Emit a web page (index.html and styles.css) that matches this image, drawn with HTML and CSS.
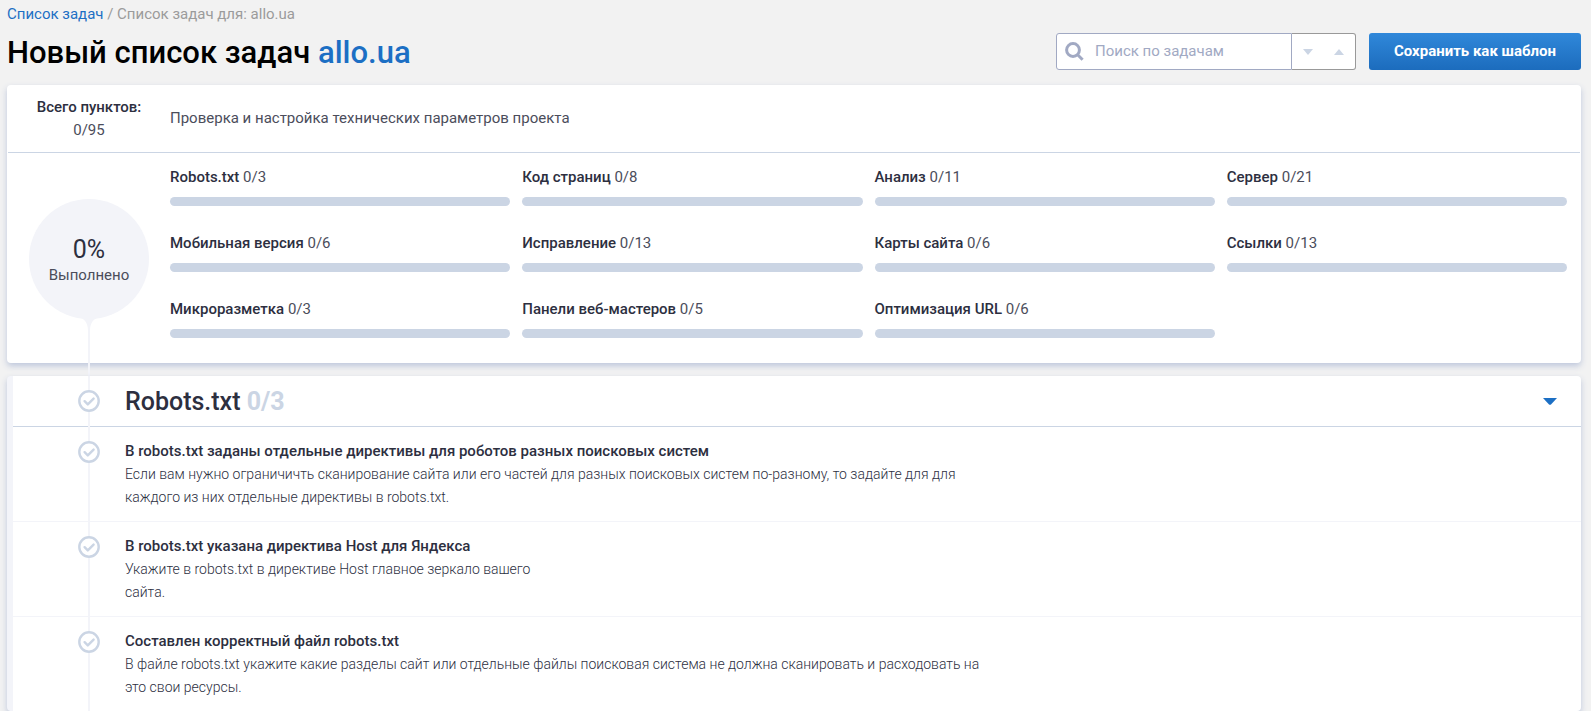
FILE: index.html
```html
<!DOCTYPE html>
<html lang="ru">
<head>
  <meta charset="UTF-8">
  <meta name="viewport" content="width=device-width, initial-scale=1.0">
  <title>Новый список задач allo.ua</title>
  <link rel="stylesheet" href="styles.css">
</head>
<body>
  <!-- icon shared by all the tasks -->
  <svg class="sprite" aria-hidden="true">
    <symbol id="check" viewBox="0 0 22 22">
      <circle cx="11" cy="11" r="9.7" fill="#fff" stroke="#cbd5e4" stroke-width="2.4"/>
      <path d="M6.6 11.2l3.2 3.2 5.8-5.8" fill="none" stroke="#cbd5e4" stroke-width="2.4" stroke-linecap="round" stroke-linejoin="round"/>
    </symbol>
  </svg>

  <nav class="breadcrumbs">
    <a href="#">Список задач</a> / Список задач для: allo.ua
  </nav>

  <header class="page-header">
    <h1>Новый список задач <span>allo.ua</span></h1>
    <form class="search">
      <label class="search-field">
        <svg width="20" height="20" viewBox="0 0 20 20" aria-hidden="true">
          <circle cx="8" cy="8" r="6.4" fill="none" stroke="#a1a9c3" stroke-width="3"/>
          <path d="M12.6 12.8l5 5" stroke="#a1a9c3" stroke-width="3"/>
        </svg>
        <input type="text" placeholder="Поиск по задачам" aria-label="Поиск по задачам">
      </label>
      <div class="search-nav">
        <button type="button" aria-label="Следующая">
          <svg width="10" height="6" viewBox="0 0 10 6"><path d="M0 0h10L5 6z" fill="#cbd5e4"/></svg>
        </button>
        <button type="button" aria-label="Предыдущая">
          <svg width="10" height="6" viewBox="0 0 10 6"><path d="M0 6h10L5 0z" fill="#cbd5e4"/></svg>
        </button>
      </div>
    </form>
    <button type="button" class="btn-save">Сохранить как шаблон</button>
  </header>

  <main>
    <section class="card summary">
      <div class="summary-head">
        <div class="total"><b>Всего пунктов:</b><br>0/95</div>
        <p>Проверка и настройка технических параметров проекта</p>
      </div>
      <div class="summary-body">
        <div class="done">
          <div class="done-circle">
            <strong>0%</strong>
            <span>Выполнено</span>
          </div>
          <svg class="done-drop" width="24" height="14" viewBox="0 0 24 14" aria-hidden="true">
            <path d="M0 0C7 1 11 5 11 14h2C13 5 17 1 24 0z" fill="#f3f4f9"/>
          </svg>
          <div class="done-line"></div>
        </div>
        <ul class="groups">
          <li><b>Robots.txt</b> 0/3<div class="bar"></div></li>
          <li><b>Код страниц</b> 0/8<div class="bar"></div></li>
          <li><b>Анализ</b> 0/11<div class="bar"></div></li>
          <li><b>Сервер</b> 0/21<div class="bar"></div></li>
          <li><b>Мобильная версия</b> 0/6<div class="bar"></div></li>
          <li><b>Исправление</b> 0/13<div class="bar"></div></li>
          <li><b>Карты сайта</b> 0/6<div class="bar"></div></li>
          <li><b>Ссылки</b> 0/13<div class="bar"></div></li>
          <li><b>Микроразметка</b> 0/3<div class="bar"></div></li>
          <li><b>Панели веб-мастеров</b> 0/5<div class="bar"></div></li>
          <li><b>Оптимизация URL</b> 0/6<div class="bar"></div></li>
        </ul>
      </div>
    </section>

    <section class="card tasks">
      <div class="tasks-head">
        <svg class="check" width="22" height="22"><use href="#check"/></svg>
        <h2>Robots.txt <span>0/3</span></h2>
        <button type="button" class="toggle" aria-label="Свернуть">
          <svg width="14" height="7" viewBox="0 0 14 7"><path d="M0 0h14L8 6.400q-1 .9-2 0z" fill="#1c6fc4"/></svg>
        </button>
      </div>
      <article class="task">
        <svg class="check" width="22" height="22"><use href="#check"/></svg>
        <div class="task-text">
          <h3>В robots.txt заданы отдельные директивы для роботов разных поисковых систем</h3>
          <p>Если вам нужно ограничичть сканирование сайта или его частей для разных поисковых систем по-разному, то задайте для для каждого из них отдельные директивы в robots.txt.</p>
        </div>
      </article>
      <article class="task">
        <svg class="check" width="22" height="22"><use href="#check"/></svg>
        <div class="task-text">
          <h3>В robots.txt указана директива Host для Яндекса</h3>
          <p>Укажите в robots.txt в директиве Host главное зеркало вашего<br>сайта.</p>
        </div>
      </article>
      <article class="task">
        <svg class="check" width="22" height="22"><use href="#check"/></svg>
        <div class="task-text">
          <h3>Составлен корректный файл robots.txt</h3>
          <p>В файле robots.txt укажите какие разделы сайт или отдельные файлы поисковая система не должна сканировать и расходовать на это свои ресурсы.</p>
        </div>
      </article>
    </section>
  </main>
</body>
</html>
```

FILE: styles.css
```css
* {
  box-sizing: border-box;
}
body {
  font-family: Roboto, sans-serif;
  font-size: 15px;
  line-height: 23px;
  margin: 0;
  padding: 3px 10px 0 7px;
  background-color: #f2f2f2;
  color: #2d2f3f;
}
h1, h2, h3, p, ul {
  margin: 0;
  padding: 0;
}
b, h1, h2, h3 {
  font-weight: 500;
}
button {
  font: inherit;
  padding: 0;
  border: 0;
  background: none;
  cursor: pointer;
}
.sprite {
  display: none;
}
.breadcrumbs {
  color: #9b9b9b;
}
.breadcrumbs a {
  color: #1c6fc4;
  text-decoration: none;
}

/* header */
.page-header {
  display: flex;
  align-items: center;
  padding: 7px 0 15px;
}
h1 {
  flex: 1;
  padding-top: 2px;
  font-size: 31px;
  line-height: 35px;
  color: #000;
}
h1 span {
  color: #1c6fc4;
}
.search {
  display: flex;
  width: 300px;
  height: 37px;
  margin-right: 13px;
}
.search-field {
  flex: 1;
  min-width: 0;
  display: flex;
  align-items: center;
  gap: 10px;
  padding-left: 8px;
  background: #fff;
  border: 1px solid #a1a9c3;
  border-radius: 3px 0 0 3px;
}
.search-field input {
  flex: 1;
  min-width: 0;
  padding: 0;
  border: 0;
  outline: 0;
  background: none;
  font: inherit;
  color: #2d2f3f;
}
.search-field input::placeholder {
  color: #a1a9c3;
  opacity: 1;
}
.search-nav {
  flex: none;
  display: flex;
  width: 64px;
  background: #fff;
  border: 1px solid #999;
  border-left: 0;
  border-radius: 0 3px 3px 0;
}
.search-nav button {
  flex: 1;
  display: flex;
  align-items: center;
  justify-content: center;
}
.btn-save {
  width: 212px;
  height: 37px;
  border-radius: 3px;
  background: linear-gradient(#3088da, #1c6cbd);
  color: #fff;
  font-weight: 700;
}

.card {
  background: #fff;
  border-radius: 4px;
  box-shadow: 0 3px 6px #bec7dc;
}

/* summary */
.summary {
  margin-bottom: 13px;
  padding: 0 1px;
  color: #4b4d5b;
}
.summary b, .summary strong {
  color: #2d2f3f;
}
.summary-head {
  display: flex;
  align-items: center;
  height: 68px;
  border-bottom: 1px solid #cbd5e4;
}
.total {
  width: 162px;
  text-align: center;
}
.summary-body {
  display: flex;
}
.done {
  display: flex;
  flex-direction: column;
  align-items: center;
  width: 162px;
  padding-top: 46px;
}
.done-circle {
  display: flex;
  flex-direction: column;
  align-items: center;
  justify-content: center;
  width: 120px;
  height: 120px;
  padding-top: 5px;
  border-radius: 50%;
  background: #f3f4f9;
}
.done-circle strong {
  font-size: 25px;
  line-height: 28px;
  font-weight: 400;
}
.done-drop {
  display: block;
  margin-top: -2px;
}
.done-line {
  position: relative;
  flex: 1;
  width: 2px;
  margin-bottom: -13px;
  background: #f3f4f9;
}
.groups {
  flex: 1;
  display: grid;
  grid-template-columns: repeat(4, 1fr);
  gap: 26px 12px;
  padding: 13px 13px 25px 0;
  list-style: none;
}
.bar {
  height: 9px;
  margin-top: 8px;
  border-radius: 5px;
  background: #cbd5e4;
}

/* tasks */
.tasks {
  position: relative;
  border-left: 6px solid #f3f4f9;
}
.tasks::before {
  content: "";
  position: absolute;
  top: 0;
  bottom: 0;
  left: 75px;
  width: 2px;
  background: #f3f4f9;
}
.check {
  position: relative;
  flex: none;
  margin: 0 25px 0 65px;
}
.tasks-head {
  display: flex;
  align-items: center;
  height: 51px;
  padding-right: 24px;
  border-bottom: 1px solid #cbd5e4;
}
h2 {
  flex: 1;
  padding-top: 2px;
  font-size: 25px;
  line-height: 28px;
}
h2 span {
  color: #cbd5e4;
  font-weight: 700;
}
.toggle {
  display: flex;
}
.task {
  display: flex;
  padding: 13px 0 12px;
  border-bottom: 1px solid #f3f4f9;
}
.task .check {
  margin-top: 1px;
}
.task:last-child {
  border-bottom: 0;
}
.task-text {
  max-width: 860px;
}
h3 {
  font-size: 15px;
}
.task p {
  font-size: 14px;
  font-weight: 300;
}
```
